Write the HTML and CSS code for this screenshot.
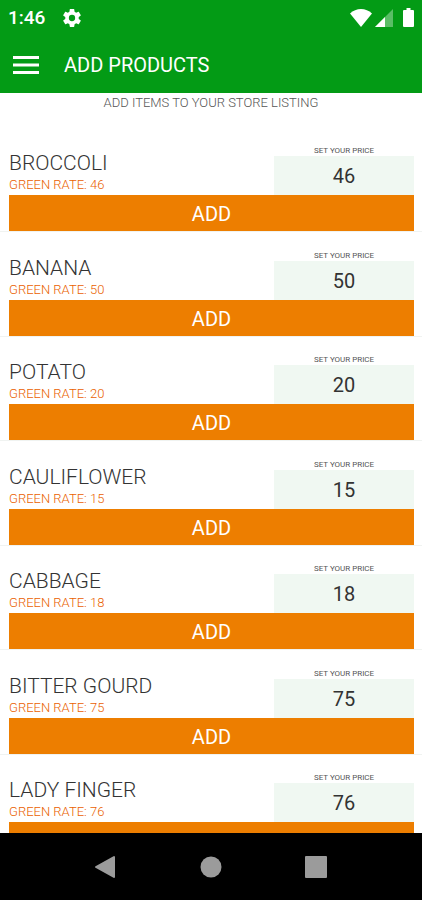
FILE: index.html
```html
<!DOCTYPE html>
<html lang="en">
<head>
<meta charset="utf-8">
<meta name="viewport" content="width=device-width, initial-scale=1">
<title>Add Products</title>
<link rel="stylesheet" href="styles.css">
</head>
<body>
<div class="screen">
  <header class="top">
    <div class="status">
      <span class="time">1:46</span>
      <svg class="gear" viewBox="2 2 20 20" aria-hidden="true"><path fill="currentColor" d="M19.43 12.98c.04-.32.07-.64.07-.98s-.03-.66-.07-.98l2.11-1.65c.19-.15.24-.42.12-.64l-2-3.46c-.12-.22-.39-.3-.61-.22l-2.49 1c-.52-.4-1.08-.73-1.69-.98l-.38-2.65C14.46 2.18 14.25 2 14 2h-4c-.25 0-.46.18-.49.42l-.38 2.65c-.61.25-1.17.59-1.69.98l-2.49-1c-.23-.09-.49 0-.61.22l-2 3.46c-.13.22-.07.49.12.64l2.11 1.65c-.04.32-.07.65-.07.98s.03.66.07.98l-2.11 1.65c-.19.15-.24.42-.12.64l2 3.46c.12.22.39.3.61.22l2.49-1c.52.4 1.08.73 1.69.98l.38 2.65c.03.24.24.42.49.42h4c.25 0 .46-.18.49-.42l.38-2.65c.61-.25 1.17-.59 1.69-.98l2.49 1c.23.09.49 0 .61-.22l2-3.46c.12-.22.07-.49-.12-.64l-2.11-1.65zM12 15.5a3.5 3.5 0 1 1 0-7 3.5 3.5 0 0 1 0 7z"/></svg>
      <span class="signals">
        <svg class="wifi" viewBox="0 0 22 18" aria-hidden="true"><path fill="currentColor" d="M11 18 0 4.500C3 1.500 7 0 11 0s8 1.500 11 4.500z"/></svg>
        <svg class="cell" viewBox="0 0 18 18" aria-hidden="true"><path fill="currentColor" opacity=".35" d="M18 0v18H0z"/><path fill="currentColor" d="M10 8v10H0z"/></svg>
        <svg class="battery" viewBox="0 0 11 19" aria-hidden="true"><path fill="currentColor" d="M3.500 0h4v2H10q1 0 1 1v15q0 1-1 1H1q-1 0-1-1V3q0-1 1-1h2.500z"/></svg>
      </span>
    </div>
    <div class="appbar">
      <button class="menu" type="button" aria-label="Menu"><svg viewBox="0 0 26 18" aria-hidden="true"><path fill="currentColor" d="M0 0h26v3H0zM0 7.500h26v3H0zM0 15h26v3H0z"/></svg></button>
      <h1 class="title">ADD PRODUCTS</h1>
    </div>
  </header>
  <main class="content">
    <p class="hint">ADD ITEMS TO YOUR STORE LISTING</p>
    <ul class="list">
      <li class="item">
        <div class="details">
          <div class="product"><h2 class="name">BROCCOLI</h2><p class="rate">GREEN RATE: 46</p></div>
          <div class="price"><label for="p1">SET YOUR PRICE</label><input id="p1" type="text" inputmode="numeric" value="46"></div>
        </div>
        <button class="add" type="button">ADD</button>
      </li>
      <li class="item">
        <div class="details">
          <div class="product"><h2 class="name">BANANA</h2><p class="rate">GREEN RATE: 50</p></div>
          <div class="price"><label for="p2">SET YOUR PRICE</label><input id="p2" type="text" inputmode="numeric" value="50"></div>
        </div>
        <button class="add" type="button">ADD</button>
      </li>
      <li class="item">
        <div class="details">
          <div class="product"><h2 class="name">POTATO</h2><p class="rate">GREEN RATE: 20</p></div>
          <div class="price"><label for="p3">SET YOUR PRICE</label><input id="p3" type="text" inputmode="numeric" value="20"></div>
        </div>
        <button class="add" type="button">ADD</button>
      </li>
      <li class="item">
        <div class="details">
          <div class="product"><h2 class="name">CAULIFLOWER</h2><p class="rate">GREEN RATE: 15</p></div>
          <div class="price"><label for="p4">SET YOUR PRICE</label><input id="p4" type="text" inputmode="numeric" value="15"></div>
        </div>
        <button class="add" type="button">ADD</button>
      </li>
      <li class="item">
        <div class="details">
          <div class="product"><h2 class="name">CABBAGE</h2><p class="rate">GREEN RATE: 18</p></div>
          <div class="price"><label for="p5">SET YOUR PRICE</label><input id="p5" type="text" inputmode="numeric" value="18"></div>
        </div>
        <button class="add" type="button">ADD</button>
      </li>
      <li class="item">
        <div class="details">
          <div class="product"><h2 class="name">BITTER GOURD</h2><p class="rate">GREEN RATE: 75</p></div>
          <div class="price"><label for="p6">SET YOUR PRICE</label><input id="p6" type="text" inputmode="numeric" value="75"></div>
        </div>
        <button class="add" type="button">ADD</button>
      </li>
      <li class="item">
        <div class="details">
          <div class="product"><h2 class="name">LADY FINGER</h2><p class="rate">GREEN RATE: 76</p></div>
          <div class="price"><label for="p7">SET YOUR PRICE</label><input id="p7" type="text" inputmode="numeric" value="76"></div>
        </div>
        <button class="add" type="button" aria-label="Add"></button>
      </li>
    </ul>
  </main>
  <nav class="navbar" aria-label="System">
    <button type="button" aria-label="Back"><svg viewBox="0 0 24 24" aria-hidden="true"><path fill="currentColor" stroke="currentColor" stroke-width="2" stroke-linejoin="round" d="M20 2v20L2 12z"/></svg></button>
    <button type="button" aria-label="Home"><svg viewBox="0 0 24 24" aria-hidden="true"><circle fill="currentColor" cx="12" cy="12" r="10.500"/></svg></button>
    <button type="button" aria-label="Recent apps"><svg viewBox="0 0 24 24" aria-hidden="true"><rect fill="currentColor" x="1" y="1" width="22" height="22" rx="1"/></svg></button>
  </nav>
</div>
</body>
</html>
```
FILE: styles.css
```css
* {
  box-sizing: border-box;
}

body,
h1,
h2,
p,
ul {
  margin: 0;
  padding: 0;
}

body {
  font-family: Roboto, sans-serif;
  background: #fff;
}

button,
input {
  border: 0;
  padding: 0;
  margin: 0;
  font: inherit;
  color: inherit;
  background: none;
}

svg {
  display: block;
}

.screen {
  display: flex;
  flex-direction: column;
  height: 100vh;
}

.top {
  flex: none;
  color: #fff;
  background: #039b15;
}

.status {
  display: flex;
  align-items: center;
  height: 35px;
  padding: 0 8px;
}

.time {
  font-size: 19px;
  line-height: 35px;
  font-weight: 500;
}

.gear {
  width: 18px;
  height: 18px;
  margin-left: 18px;
}

.signals {
  display: flex;
  align-items: center;
  margin-left: auto;
}

.wifi {
  width: 22px;
  height: 18px;
}

.cell {
  width: 18px;
  height: 18px;
  margin: 0 10px 0 3px;
}

.battery {
  width: 11px;
  height: 19px;
}

.appbar {
  display: flex;
  align-items: center;
  gap: 25px;
  height: 58px;
  padding: 2px 13px 0;
}

.menu svg {
  width: 26px;
  height: 18px;
}

.title {
  font-size: 20px;
  line-height: 24px;
  font-weight: 400;
}

.content {
  flex: 1;
  min-height: 0;
  overflow: hidden;
}

.hint {
  height: 35px;
  padding-top: 2px;
  font-size: 13px;
  line-height: 16px;
  font-weight: 300;
  text-align: center;
  color: #555;
}

.list {
  list-style: none;
}

.item {
  padding: 17px 8px 0 9px;
  border-bottom: 1px solid #f0f3f1;
}

.item:nth-child(even) {
  padding-top: 18px;
}

.details {
  display: flex;
  justify-content: space-between;
  height: 50px;
}

.product {
  padding-top: 4px;
}

.name {
  font-size: 21px;
  line-height: 28px;
  font-weight: 300;
  color: #333;
}

.rate {
  font-size: 13px;
  line-height: 16px;
  font-weight: 300;
  color: #ea5f00;
}

.price {
  display: flex;
  flex-direction: column;
  width: 140px;
}

.price label {
  font-size: 8px;
  line-height: 11px;
  text-align: center;
  color: #555;
}

.price input {
  width: 100%;
  height: 39px;
  font-size: 20px;
  text-align: center;
  color: #333;
  background: #f0f8f2;
}

.add {
  display: block;
  width: 100%;
  height: 36px;
  padding-top: 2px;
  font-size: 20px;
  line-height: 34px;
  color: #fff;
  background: #ed7e00;
}

.navbar {
  flex: none;
  display: flex;
  justify-content: center;
  gap: 81px;
  height: 67px;
  color: #9b9b9b;
  background: #000;
}

.navbar svg {
  width: 24px;
  height: 24px;
}
```
